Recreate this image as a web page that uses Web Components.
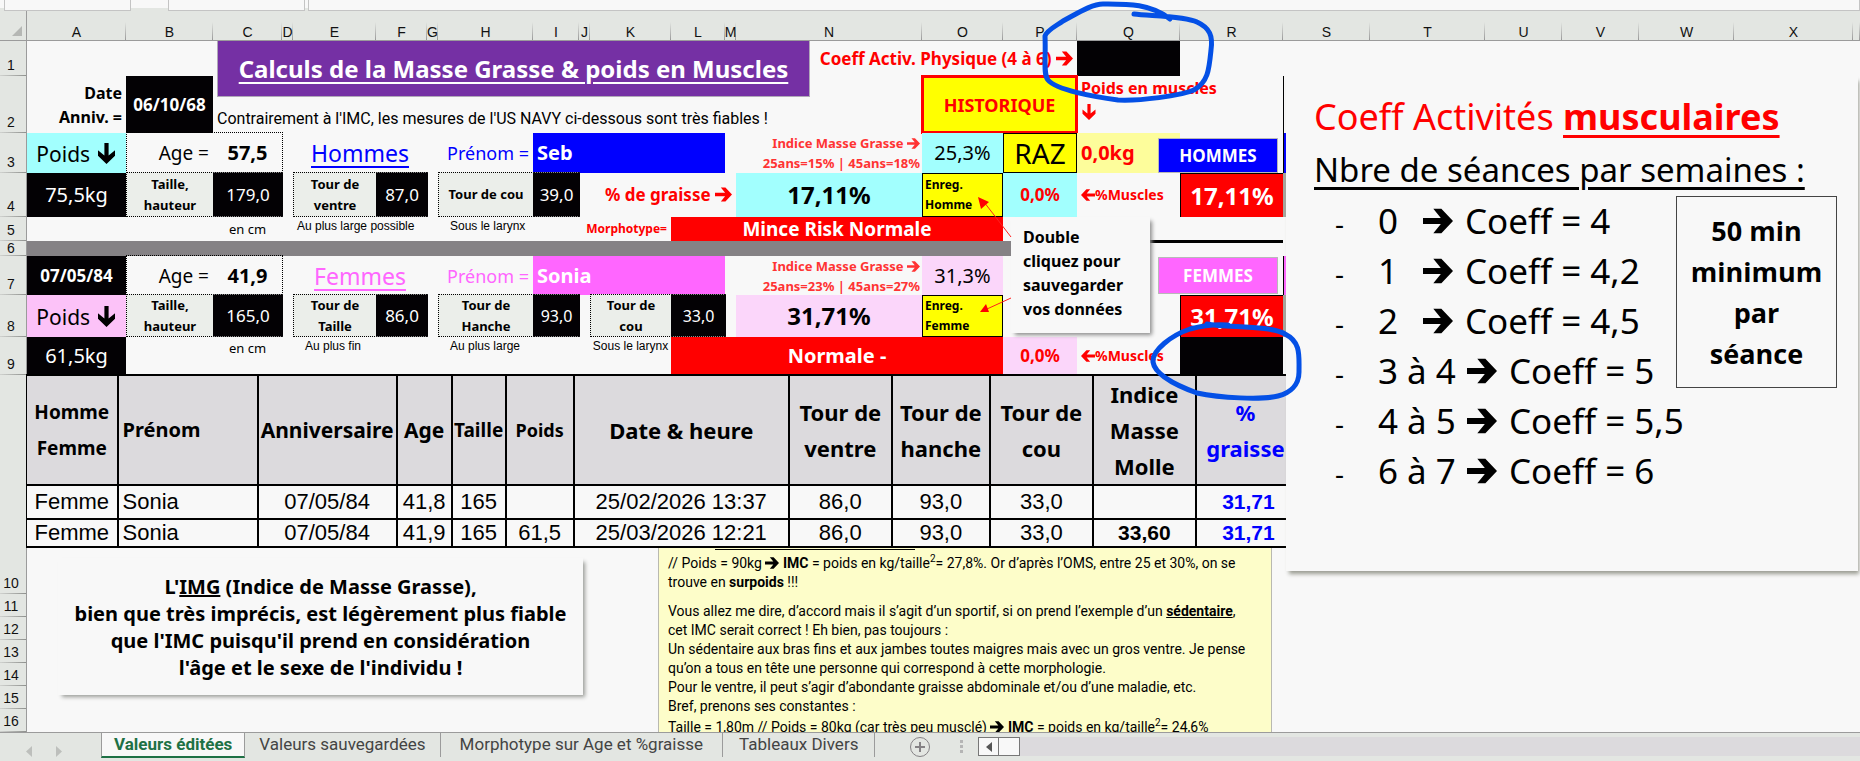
<!DOCTYPE html>
<html lang="fr">
<head>
<meta charset="utf-8">
<title>Calculs de la Masse Grasse</title>
<style>
    body {
        margin: 0;
        background: #f8f8f8;
        color: #000;
        font-family: "Noto Sans", "Open Sans", sans-serif;
    }
</style>
</head>
<body>
<calc-app>
    <calc-sheet>
        <sheet-cell ref="A2" size="16" bold align="end" style="--line: 24px">Date<br>Anniv. =</sheet-cell>
        <sheet-cell ref="B2" size="17" bold tone="black">06/10/68</sheet-cell>
        <sheet-title ref="C1:N2">Calculs de la Masse Grasse &amp; poids en Muscles</sheet-title>
        <sheet-cell ref="C2:N2" size="16" align="start" valign="end" face="text">Contrairement à l'IMC, les mesures de l'US NAVY ci-dessous sont très fiables !</sheet-cell>
        <sheet-cell ref="N1:P1" size="17" bold tone="alert" align="end">Coeff Activ. Physique (4 à 6) <arrow-glyph></arrow-glyph></sheet-cell>
        <sheet-cell ref="Q1" tone="black"></sheet-cell>
        <sheet-button ref="O2:P2" kind="history">HISTORIQUE</sheet-button>
        <sheet-cell ref="Q2:R2" size="16" bold tone="alert" align="start" valign="start" style="--line: 24px">Poids en muscles<br><arrow-glyph dir="down"></arrow-glyph></sheet-cell>
        <sheet-cell ref="S2" edge="left"></sheet-cell>

        <sheet-cell ref="A3" size="21" tone="aqua">Poids <arrow-glyph dir="down"></arrow-glyph></sheet-cell>
        <sheet-cell ref="B3:C3" edge="dotted"></sheet-cell>
        <sheet-cell ref="B3" size="19" align="end">Age =</sheet-cell>
        <sheet-cell ref="C3" size="20" bold>57,5</sheet-cell>
        <sheet-cell ref="E3:F3" size="23" underline style="color: #0000ff">Hommes</sheet-cell>
        <sheet-cell ref="H3" size="18" align="end" style="color: #0000ff">Prénom =</sheet-cell>
        <sheet-cell ref="I3:L3" size="20" bold tone="blue" align="start">Seb</sheet-cell>
        <sheet-cell ref="N3" size="13" bold align="end" tone="hint">Indice Masse Grasse <arrow-glyph></arrow-glyph><br>25ans=15% | 45ans=18%</sheet-cell>
        <sheet-cell ref="O3" size="20" tone="aqua">25,3%</sheet-cell>
        <sheet-button ref="P3" kind="reset">RAZ</sheet-button>
        <sheet-cell ref="Q3" size="20" bold tone="cream" align="start">0,0kg</sheet-cell>
        <sheet-button ref="Q3:R3" kind="men">HOMMES</sheet-button>
        <sheet-cell ref="S3" tone="blue" edge="left"></sheet-cell>

        <sheet-cell ref="A4" size="20" tone="black">75,5kg</sheet-cell>
        <sheet-cell ref="B4" size="13" bold tone="label" edge="dotted">Taille,<br>hauteur</sheet-cell>
        <sheet-cell ref="C4" size="17" tone="black" edge="dotted">179,0</sheet-cell>
        <sheet-cell ref="E4" size="13" bold tone="label" edge="dotted">Tour de<br>ventre</sheet-cell>
        <sheet-cell ref="F4" size="17" tone="black" edge="dotted">87,0</sheet-cell>
        <sheet-cell ref="H4" size="13" bold tone="label" edge="dotted">Tour de cou</sheet-cell>
        <sheet-cell ref="I4" size="17" tone="black" edge="dotted">39,0</sheet-cell>
        <sheet-cell ref="J4:M4" size="17" bold tone="alert" align="end">% de graisse <arrow-glyph></arrow-glyph></sheet-cell>
        <sheet-cell ref="N4" size="24" bold tone="aqua">17,11%</sheet-cell>
        <sheet-button ref="O4" kind="save">Enreg.<br>Homme</sheet-button>
        <sheet-cell ref="P4" size="17" bold tone="aqua" style="color: #ff0000">0,0%</sheet-cell>
        <sheet-cell ref="Q4" size="14" bold tone="alert" align="start"><arrow-glyph dir="left"></arrow-glyph>%Muscles</sheet-cell>
        <sheet-cell ref="R4" size="24" bold tone="red" edge="corner">17,11%</sheet-cell>
        <sheet-cell ref="S4" tone="gray"></sheet-cell>

        <sheet-cell ref="C5" size="13">en cm</sheet-cell>
        <sheet-cell ref="E5:G5" size="12" face="plain" align="start" valign="start">Au plus large possible</sheet-cell>
        <sheet-cell ref="H5:I5" size="12" face="plain" align="start" valign="start" indent>Sous le larynx</sheet-cell>
        <sheet-cell ref="J5:K5" size="12" bold tone="alert" align="end">Morphotype=</sheet-cell>
        <sheet-cell ref="L5:O5" size="19" bold tone="red">Mince Risk Normale</sheet-cell>

        <sheet-cell ref="A6:P6" tone="dim"></sheet-cell>
        <sheet-cell ref="Q6:R6" edge="top"></sheet-cell>

        <sheet-cell ref="A7" size="17" bold tone="black">07/05/84</sheet-cell>
        <sheet-cell ref="B7:C7" edge="dotted"></sheet-cell>
        <sheet-cell ref="B7" size="19" align="end">Age =</sheet-cell>
        <sheet-cell ref="C7" size="20" bold>41,9</sheet-cell>
        <sheet-cell ref="E7:F7" size="23" underline style="color: #ff66ff">Femmes</sheet-cell>
        <sheet-cell ref="H7" size="18" align="end" style="color: #ff66ff">Prénom =</sheet-cell>
        <sheet-cell ref="I7:L7" size="20" bold tone="pink" align="start">Sonia</sheet-cell>
        <sheet-cell ref="N7" size="13" bold align="end" tone="hint">Indice Masse Grasse <arrow-glyph></arrow-glyph><br>25ans=23% | 45ans=27%</sheet-cell>
        <sheet-cell ref="O7" size="20" tone="blush">31,3%</sheet-cell>
        <sheet-button ref="Q7:R7" kind="women">FEMMES</sheet-button>
        <sheet-cell ref="S7" tone="pink" edge="left"></sheet-cell>

        <sheet-cell ref="A8" size="21" tone="rose">Poids <arrow-glyph dir="down"></arrow-glyph></sheet-cell>
        <sheet-cell ref="B8" size="13" bold tone="label" edge="dotted">Taille,<br>hauteur</sheet-cell>
        <sheet-cell ref="C8" size="17" tone="black" edge="dotted">165,0</sheet-cell>
        <sheet-cell ref="E8" size="13" bold tone="label" edge="dotted">Tour de<br>Taille</sheet-cell>
        <sheet-cell ref="F8" size="17" tone="black" edge="dotted">86,0</sheet-cell>
        <sheet-cell ref="H8" size="13" bold tone="label" edge="dotted">Tour de<br>Hanche</sheet-cell>
        <sheet-cell ref="I8" size="16" tone="black" edge="dotted">93,0</sheet-cell>
        <sheet-cell ref="K8" size="13" bold tone="label" edge="dotted">Tour de<br>cou</sheet-cell>
        <sheet-cell ref="L8" size="16" tone="black" edge="dotted">33,0</sheet-cell>
        <sheet-cell ref="N8" size="24" bold tone="blush">31,71%</sheet-cell>
        <sheet-button ref="O8" kind="save">Enreg.<br>Femme</sheet-button>
        <sheet-cell ref="R8" size="24" bold tone="red" edge="corner">31,71%</sheet-cell>
        <sheet-cell ref="S8" tone="gray"></sheet-cell>

        <sheet-cell ref="A9" size="20" tone="black">61,5kg</sheet-cell>
        <sheet-cell ref="C9" size="13" valign="start" style="--line: 22px">en cm</sheet-cell>
        <sheet-cell ref="E9:G9" size="12" face="plain" align="start" valign="start" indent>Au plus fin</sheet-cell>
        <sheet-cell ref="H9:I9" size="12" face="plain" align="start" valign="start" indent>Au plus large</sheet-cell>
        <sheet-cell ref="K9" size="12" face="plain" valign="start">Sous le larynx</sheet-cell>
        <sheet-cell ref="L9:O9" size="20" bold tone="red">Normale -</sheet-cell>
        <sheet-cell ref="P9" size="17" bold tone="blush" style="color: #ff0000">0,0%</sheet-cell>
        <sheet-cell ref="Q9" size="14" bold tone="alert" align="start"><arrow-glyph dir="left"></arrow-glyph>%Muscles</sheet-cell>
        <sheet-cell ref="R9" tone="black"></sheet-cell>

        <save-hint ref="P5:Q8">Double<br>cliquez pour<br>sauvegarder<br>vos données</save-hint>
        <history-table ref="A10:R10"></history-table>
        <img-note ref="A11:J16">L'<u>IMG</u> (Indice de Masse Grasse),<br>bien que très imprécis, est légèrement plus fiable<br>que l'IMC puisqu'il prend en considération<br>l'âge et le sexe de l'individu !</img-note>
        <imc-comment ref="K11:R17"></imc-comment>
        <coeff-card ref="S2:Y11"></coeff-card>
    </calc-sheet>
    <sheet-tabs slot="footer"></sheet-tabs>
</calc-app>

<script>
// Turns "B3:C4" into grid lines. Track 1 of each axis holds the headings.
function placeOnGrid(el) {
    const [from, to] = el.getAttribute('ref').split(':');
    const parse = (r) => ({ col: r.charCodeAt(0) - 63, row: Number(r.slice(1)) + 1 });
    const a = parse(from);
    const b = parse(to || from);
    el.style.gridArea = `${a.row} / ${a.col} / ${b.row + 1} / ${b.col + 1}`;
}

class CalcApp extends HTMLElement {
    constructor() {
        super();
        this.attachShadow({ mode: 'open' }).innerHTML = `
            <style>
                :host { display: block; position: relative; overflow: hidden; }
                .strip { display: flex; height: 11px; box-sizing: border-box; padding: 0 0 0 4px; background: linear-gradient(#f8f8f8 8px, #e3e6e2 8px); }
                .strip div { box-sizing: border-box; background: #f8f8f8; border: 1px solid #c4c4c4; border-top: 0; }
                .name { width: 127px; margin-right: 37px; }
                .tools { width: 137px; margin-right: 3px; }
                .formula { flex: 1; }
                .ink { position: absolute; inset: 0; width: 100%; height: 100%; pointer-events: none; }
            </style>
            <div class="strip"><div class="name"></div><div class="tools"></div><div class="formula"></div></div>
            <slot></slot>
            <slot name="footer"></slot>
            <svg class="ink" viewBox="0 0 1860 761" preserveAspectRatio="none" fill="none">
                <g stroke="#ff2020" stroke-width="1"><path d="M1011 237 984 202M1011 298 987 309"/></g>
                <path fill="#f00" d="M978 197 989 202 981 209zM980 312 986 304 989 312z"/>
                <g stroke="#0450e6" stroke-width="5" stroke-linecap="round" stroke-linejoin="round">
                    <path d="M1134 14C1150 16 1185 16 1197 22C1210 28 1213 36 1211 50C1209 70 1208 82 1194 90C1180 96 1140 101 1118 100C1095 97 1056 90 1048 80C1043 74 1046 60 1045 36C1047 30 1056 26 1063 21C1078 13 1092 4 1103 4C1125 4 1150 3 1170 19"/>
                    <path d="M1207 324C1225 328 1270 325 1285 334C1301 342 1299 355 1299 372C1299 385 1290 393 1278 396C1262 400 1220 398 1197 393C1175 385 1155 375 1153 362C1152 350 1172 335 1190 329C1205 325 1215 324 1228 325"/>
                </g>
            </svg>
        `;
    }
}

class CalcSheet extends HTMLElement {
    constructor() {
        super();
        this.attachShadow({ mode: 'open' });
        this.render();
    }

    render() {
        const cols = [...'ABCDEFGHIJKLMNOPQRSTUVWX', ''];
        const rows = [1, 2, 3, 4, 5, 6, 7, 8, 9, '', 10, 11, 12, 13, 14, 15, 16];
        this.shadowRoot.innerHTML = `
            <style>
                :host {
                    display: grid;
                    grid-template-columns:
                        27px 99fr 87fr 69fr 11fr 83fr 51fr 11fr 95fr 46fr 11fr 81fr 54fr 11fr
                        186fr 81fr 74fr 103fr 103fr 87fr 115fr 77fr 77fr 95fr 119fr 7fr;
                    grid-template-rows: 30px 35px 57px 40px 44px 24px 15px 39px 42px 38px auto 46px repeat(6, 23px);
                }
                .head {
                    display: flex;
                    box-sizing: border-box;
                    min-width: 0;
                    background: #e3e6e2;
                    font: 14px/16px "Liberation Sans", Arial, sans-serif;
                    color: #111;
                }
                .col {
                    align-items: end;
                    justify-content: center;
                    border-bottom: 1px solid #9b9b9b;
                    background: linear-gradient(#e3e6e2, #999) right bottom / 1px 18px no-repeat #e3e6e2;
                }
                .row {
                    align-items: end;
                    justify-content: center;
                    overflow: hidden;
                    padding: 0 4px 3px 0;
                    border-right: 1px solid #9b9b9b;
                    background: linear-gradient(90deg, #d0d2cf, #8f918e) left bottom / 100% 1px no-repeat #e3e6e2;
                }
                .row.thin { padding-bottom: 0; line-height: 15px; }
                .row.blank { background: #e3e6e2; }
                .corner { align-items: end; justify-content: end; padding: 0 4px 4px; border: solid #9b9b9b; border-width: 0 1px 1px 0; }
            </style>
            <div class="head corner"><svg width="10" height="10"><path d="M10 0v10H0z" fill="#b5b7b4"/></svg></div>
            ${cols.map((c, i) => `<div class="head col" style="grid-area: 1 / ${i + 2}">${c}</div>`).join('')}
            ${rows.map((r, i) => `<div class="head row ${r === 6 ? 'thin' : ''} ${r ? '' : 'blank'}" style="grid-area: ${i + 2} / 1">${r}</div>`).join('')}
            <slot></slot>
        `;
    }
}

class SheetCell extends HTMLElement {
    constructor() {
        super();
        this.attachShadow({ mode: 'open' }).innerHTML = `
            <style>
                :host {
                    display: flex;
                    align-items: center;
                    justify-content: center;
                    box-sizing: border-box;
                    min-width: 0;
                    padding: 0 4px;
                    white-space: nowrap;
                    text-align: center;
                    line-height: var(--line, 20px);
                }
                :host([bold]) { font-weight: 700; }
                :host([underline]) { text-decoration: underline; text-decoration-thickness: 2px; text-underline-offset: 4px; }
                :host([align="start"]) { justify-content: start; text-align: left; }
                :host([align="end"]) { justify-content: end; text-align: right; }
                :host([valign="start"]) { align-items: start; line-height: var(--line, 18px); }
                :host([valign="end"]) { align-items: end; padding-bottom: 4px; }
                :host([indent]) { padding-left: 12px; }
                :host([face="text"]) { font-family: Roboto, Lato, sans-serif; }
                :host([face="plain"]) { font-family: "Liberation Sans", Arial, sans-serif; }
                :host([tone="black"]) { background: #030104; color: #fff; }
                :host([tone="blue"]) { background: #0000ff; color: #fff; }
                :host([tone="pink"]) { background: #ff66ff; color: #fff; }
                :host([tone="red"]) { background: #ff0000; color: #fff; }
                :host([tone="aqua"]) { background: #a2fffe; }
                :host([tone="blush"]) { background: #fbd6fa; }
                :host([tone="rose"]) { background: #fcc2f8; }
                :host([tone="cream"]) { background: #fdfd9b; color: #ff0000; }
                :host([tone="label"]) { background: #ebeeea; line-height: 21px; }
                :host([tone="gray"]) { background: #a5a59c; }
                :host([tone="dim"]) { background: #858285; }
                :host([tone="alert"]) { color: #ff0000; }
                :host([tone="hint"]) { color: #ff3333; padding-right: 2px; }
                :host([edge="dotted"]) { border: 1px dotted #000; padding: 0 2px; margin: -1px -1px 0 0; }
                :host([edge="dotted"][tone="black"]) { border-color: #8a8a8a #030104; }
                :host([edge="left"]) { border-left: 1px solid #000; }
                :host([edge="top"]) { border-top: 3px solid #000; margin-top: -1px; }
                :host([edge="corner"]) { border: solid #000; border-width: 1px 0 0 1px; }
            </style>
            <span><slot></slot></span>
        `;
    }

    connectedCallback() {
        placeOnGrid(this);
        if (this.hasAttribute('size')) {
            this.style.fontSize = this.getAttribute('size') + 'px';
        }
    }
}

class ArrowGlyph extends HTMLElement {
    constructor() {
        super();
        this.attachShadow({ mode: 'open' }).innerHTML = `
            <style>
                :host { display: inline-block; line-height: 0; }
                svg { width: 1em; height: 1em; vertical-align: -2px; fill: currentColor; }
                :host([dir="down"]) svg { transform: rotate(90deg); }
                :host([dir="left"]) svg { transform: rotate(180deg); }
            </style>
            <svg viewBox="0 0 16 16" aria-hidden="true"><path d="M0 6.400h9.500L5.500 1.500h4.300L16 8l-6.200 6.500H5.500l4-4.900H0z"/></svg>
        `;
    }
}

class SheetTitle extends HTMLElement {
    constructor() {
        super();
        this.attachShadow({ mode: 'open' }).innerHTML = `
            <style>
                :host { display: block; align-self: start; margin: 0 112px 0 4px; }
                h1 {
                    margin: 0;
                    padding: 12px 0 11px;
                    border: solid #b0a8b8;
                    border-width: 0 1px 1px;
                    background: #7530a4;
                    color: #fff;
                    font-size: 24px;
                    line-height: 32px;
                    text-align: center;
                    text-decoration: underline;
                    text-decoration-thickness: 2px;
                    text-underline-offset: 4px;
                    white-space: nowrap;
                }
            </style>
            <h1><slot></slot></h1>
        `;
    }

    connectedCallback() {
        placeOnGrid(this);
    }
}

class SheetButton extends HTMLElement {
    constructor() {
        super();
        this.attachShadow({ mode: 'open' }).innerHTML = `
            <style>
                :host { display: grid; min-width: 0; }
                button {
                    box-sizing: border-box;
                    padding: 0;
                    border: 1px solid #000;
                    background: #ffff00;
                    color: #000;
                    font: 700 17px/20px "Noto Sans", sans-serif;
                    cursor: pointer;
                }
                :host([kind="history"]) { margin: -1px; }
                :host([kind="history"]) button { border: 3px solid #ff0000; color: #ff0000; font-size: 18px; }
                :host([kind="reset"]) button { font-size: 28px; font-weight: 400; line-height: 32px; }
                :host([kind="save"]) button { padding-left: 2px; font-size: 12px; text-align: left; }
                :host([kind="men"]), :host([kind="women"]) { margin: 5px 5px 0 81px; }
                :host([kind="women"]) { margin-top: 1px; margin-bottom: 1px; }
                :host([kind="men"]) button { background: #0000ff; border-color: #b8b8b8; color: #fff; }
                :host([kind="women"]) button { background: #ff66ff; border-color: #b8b8b8; color: #fff; }
            </style>
            <button type="button"><slot></slot></button>
        `;
    }

    connectedCallback() {
        placeOnGrid(this);
    }
}

class SaveHint extends HTMLElement {
    constructor() {
        super();
        this.attachShadow({ mode: 'open' }).innerHTML = `
            <style>
                :host {
                    display: block;
                    margin: 0 30px 4px 8px;
                    padding: 8px 12px 0;
                    box-sizing: border-box;
                    background: #f8f8f8;
                    box-shadow: 3px 3px 4px -1px #8c8c8c;
                    font-size: 16px;
                    font-weight: 700;
                    line-height: 24px;
                    white-space: nowrap;
                }
            </style>
            <slot></slot>
        `;
    }

    connectedCallback() {
        placeOnGrid(this);
    }
}

class HistoryTable extends HTMLElement {
    constructor() {
        super();
        this.attachShadow({ mode: 'open' });
        this.columns = [
            ['Homme<br>Femme', 91, 19],
            ['Prénom', 140, 20],
            ['Anniversaire', 139, 21],
            ['Age', 55, 21],
            ['Taille', 54, 19],
            ['Poids', 68, 18],
            ['Date &amp; heure', 215, 22],
            ['Tour de<br>ventre', 103, 22],
            ['Tour de<br>hanche', 98, 22],
            ['Tour de<br>cou', 103, 22],
            ['Indice<br>Masse<br>Molle', 103, 22],
            ['%<br>graisse', 90, 22]
        ];
        this.records = [
            ['Femme', 'Sonia', '07/05/84', '41,8', '165', '', '25/02/2026 13:37', '86,0', '93,0', '33,0', '', '31,71'],
            ['Femme', 'Sonia', '07/05/84', '41,9', '165', '61,5', '25/03/2026 12:21', '86,0', '93,0', '33,0', '33,60', '31,71']
        ];
    }

    connectedCallback() {
        placeOnGrid(this);
        const total = this.columns.reduce((sum, c) => sum + c[1], 0);
        this.shadowRoot.innerHTML = `
            <style>
                :host { display: block; margin: -1px -3px 0 -1px; overflow: hidden; }
                table { width: 100%; table-layout: fixed; border-collapse: collapse; }
                th, td { padding: 0; border: 2px solid #000; white-space: nowrap; text-align: center; }
                th { height: 108px; background: #dcdadd; font-weight: 700; line-height: 36px; }
                td { height: 32px; font: 22px/24px "Liberation Sans", Arial, sans-serif; }
                tbody tr:last-child td { height: 26px; }
                tr > :first-child { border-left-width: 1px; }
                th:nth-child(2), td:nth-child(2) { padding-left: 4px; text-align: left; }
                td:nth-child(n+11) { font-weight: 700; font-size: 21px; }
                th:last-child, td:last-child { border-right: 0; color: #0000ff; padding-left: 14px; }
                th:last-child { padding-left: 8px; }
            </style>
            <table>
                <colgroup>${this.columns.map((c) => `<col style="width: ${c[1] / total * 100}%">`).join('')}</colgroup>
                <thead><tr>${this.columns.map((c) => `<th scope="col" style="font-size: ${c[2]}px">${c[0]}</th>`).join('')}</tr></thead>
                <tbody>${this.records.map((r) => `<tr>${r.map((v) => `<td>${v}</td>`).join('')}</tr>`).join('')}</tbody>
            </table>
        `;
    }
}

class ImgNote extends HTMLElement {
    constructor() {
        super();
        this.attachShadow({ mode: 'open' }).innerHTML = `
            <style>
                :host {
                    display: block;
                    margin: 10px 7px 14px 31px;
                    padding-top: 15px;
                    box-sizing: border-box;
                    box-shadow: 3px 3px 4px -1px #9a9c98;
                    background: #f8f8f8;
                    font-size: 20px;
                    font-weight: 700;
                    line-height: 27px;
                    text-align: center;
                    white-space: nowrap;
                }
            </style>
            <slot></slot>
        `;
    }

    connectedCallback() {
        placeOnGrid(this);
    }
}

class ImcComment extends HTMLElement {
    constructor() {
        super();
        this.attachShadow({ mode: 'open' }).innerHTML = `
            <style>
                :host {
                    display: block;
                    contain: size;
                    overflow: hidden;
                    box-sizing: border-box;
                    margin: 0 11px 0 68px;
                    padding: 0 9px;
                    border: solid #b9b9b0;
                    border-width: 0 1px;
                    background: #fdfdc9;
                    font: 14px/19px Roboto, Lato, sans-serif;
                    white-space: nowrap;
                }
                .rule { width: 200px; height: 1px; margin: 1px 0 4px 47px; background: #000; }
                p { margin: 0 0 2px; }
                .first { margin-bottom: 10px; }
                sup { font-size: 10px; line-height: 0; }
                arrow-glyph { font-size: 14px; }
            </style>
            <div class="rule"></div>
            <p class="first">// Poids = 90kg <arrow-glyph></arrow-glyph> <b>IMC</b> = poids en kg/taille<sup>2</sup>= 27,8%. Or d’après l’OMS, entre 25 et 30%, on se<br>trouve en <b>surpoids</b> !!!</p>
            <p>Vous allez me dire, d’accord mais il s’agit d’un sportif, si on prend l’exemple d’un <b><u>sédentaire</u></b>,<br>cet IMC serait correct ! Eh bien, pas toujours :<br>Un sédentaire aux bras fins et aux jambes toutes maigres mais avec un gros ventre. Je pense<br>qu’on a tous en tête une personne qui correspond à cette morphologie.<br>Pour le ventre, il peut s’agir d’abondante graisse abdominale et/ou d’une maladie, etc.<br>Bref, prenons ses constantes :</p>
            <p>Taille = 1,80m // Poids = 80kg (car très peu musclé) <arrow-glyph></arrow-glyph> <b>IMC</b> = poids en kg/taille<sup>2</sup>= 24,6%</p>
        `;
    }

    connectedCallback() {
        placeOnGrid(this);
    }
}

class CoeffCard extends HTMLElement {
    constructor() {
        super();
        this.attachShadow({ mode: 'open' });
        this.levels = [['0', '4'], ['1', '4,2'], ['2', '4,5'], ['3 à 4', '5'], ['4 à 5', '5,5'], ['6 à 7', '6']];
    }

    connectedCallback() {
        placeOnGrid(this);
        this.shadowRoot.innerHTML = `
            <style>
                :host {
                    display: block;
                    margin: 0 2px 23px 3px;
                    padding: 14px 0 0 28px;
                    box-sizing: border-box;
                    background: #f8f8f8;
                    box-shadow: 2px 4px 4px -1px #9a9c92;
                    white-space: nowrap;
                }
                h2, h3 { margin: 0; font-weight: 400; }
                h2 { color: #ff0000; font-size: 36px; line-height: 54px; }
                h3 { font-size: 33px; line-height: 52px; }
                u { text-decoration-thickness: 3px; text-underline-offset: 5px; }
                aside {
                    float: right;
                    margin-right: 21px;
                    padding: 13px 0;
                    width: 159px;
                    border: 1px solid #444;
                    font: 700 27px/41px "Open Sans", "Noto Sans", sans-serif;
                    text-align: center;
                }
                ul { margin: 0; padding: 0; list-style: none; font-size: 35px; line-height: 50px; }
                li { height: 50px; padding-left: 21px; }
                li span { display: inline-block; }
                .dash { width: 43px; font-size: 28px; }
                .count { min-width: 45px; }
                .wide .count { min-width: 89px; }
                arrow-glyph { font-size: 30px; margin-right: 12px; }
            </style>
            <h2>Coeff Activités <b><u>musculaires</u></b></h2>
            <h3><u>Nbre de séances par semaines :</u></h3>
            <aside>50 min<br>minimum<br>par<br>séance</aside>
            <ul>
                ${this.levels.map(([count, coeff]) => `
                    <li class="${count.length > 1 ? 'wide' : ''}"><span class="dash">-</span><span class="count">${count}</span><arrow-glyph></arrow-glyph>Coeff = ${coeff}</li>
                `).join('')}
            </ul>
        `;
    }
}

class SheetTabs extends HTMLElement {
    constructor() {
        super();
        this.attachShadow({ mode: 'open' }).innerHTML = `
            <style>
                :host {
                    display: flex;
                    height: 29px;
                    box-sizing: border-box;
                    border-top: 1px solid #9b9b9b;
                    background: #e3e6e2;
                }
                button { border: 0; padding: 0; background: none; color: #444; font: 17px/20px Roboto, Lato, sans-serif; white-space: nowrap; }
                nav { display: flex; align-items: start; }
                .moves { display: flex; gap: 24px; width: 101px; box-sizing: border-box; padding: 12px 0 0 26px; }
                .moves button { height: 12px; line-height: 0; }
                .tab { height: 24px; padding: 0 14px 3px; border-right: 1px solid #9b9b9b; }
                .tab.on {
                    height: 25px;
                    padding: 0 12px 2px;
                    border: solid #9b9b9b;
                    border-width: 0 1px;
                    border-bottom: 2px solid #1e7145;
                    background: #f8f8f8;
                    color: #1e7145;
                    font-weight: 700;
                }
                .tab:nth-child(3) { padding: 0 19px 3px; }
                .tab:nth-child(4) { padding: 0 16px 3px; }
                .add { margin: 3px 0 0 34px; width: 22px; height: 22px; }
                .grip { margin: 7px 15px 0 29px; width: 3px; height: 13px; background: repeating-linear-gradient(#b5b5b5 0 3px, transparent 3px 5px); }
                .bar { display: flex; flex: 1; height: 19px; margin-top: 4px; background: #dcdadd; }
                .bar button { width: 21px; box-sizing: border-box; border: 1px solid #777; background: #f8f8f8; line-height: 0; }
                .bar button + button { border-left: 0; }
            </style>
            <div class="moves">
                <button type="button" aria-label="Feuille précédente"><svg width="6" height="11"><path d="M6 0v11L0 5.500z" fill="#bdbfbc"/></svg></button>
                <button type="button" aria-label="Feuille suivante"><svg width="6" height="11"><path d="M0 0v11l6-5.500z" fill="#bdbfbc"/></svg></button>
            </div>
            <nav>
                <button type="button" class="tab on">Valeurs éditées</button>
                <button type="button" class="tab">Valeurs sauvegardées</button>
                <button type="button" class="tab">Morphotype sur Age et %graisse</button>
                <button type="button" class="tab">Tableaux Divers</button>
            </nav>
            <button type="button" class="add" aria-label="Nouvelle feuille"><svg width="22" height="22" fill="none" stroke="#858285"><circle cx="11" cy="11" r="9.500"/><path stroke-width="2" d="M11 6v10M6 11h10"/></svg></button>
            <div class="grip"></div>
            <div class="bar">
                <button type="button" aria-label="Défiler à gauche"><svg width="6" height="10"><path d="M6 0v10L0 5z" fill="#555"/></svg></button>
                <button type="button" aria-label="Curseur"></button>
            </div>
        `;
    }
}

customElements.define('arrow-glyph', ArrowGlyph);
customElements.define('calc-app', CalcApp);
customElements.define('calc-sheet', CalcSheet);
customElements.define('sheet-cell', SheetCell);
customElements.define('sheet-title', SheetTitle);
customElements.define('sheet-button', SheetButton);
customElements.define('save-hint', SaveHint);
customElements.define('history-table', HistoryTable);
customElements.define('img-note', ImgNote);
customElements.define('imc-comment', ImcComment);
customElements.define('coeff-card', CoeffCard);
customElements.define('sheet-tabs', SheetTabs);
</script>
</body>
</html>
